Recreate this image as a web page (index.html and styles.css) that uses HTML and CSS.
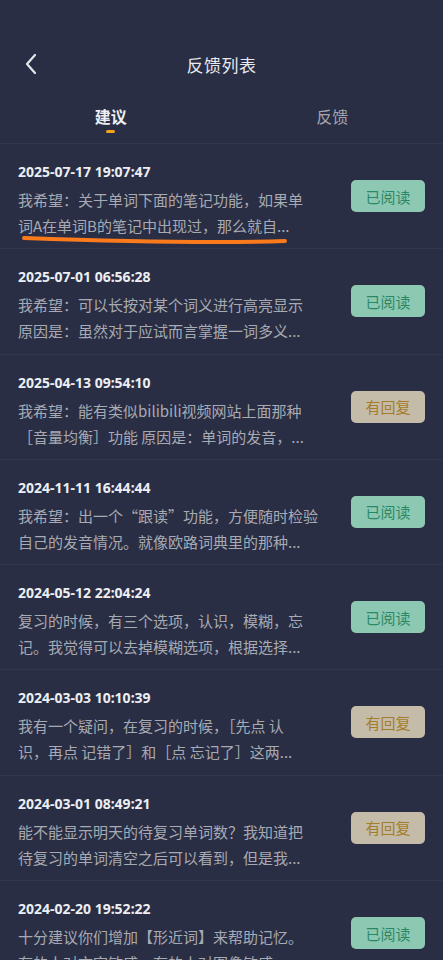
FILE: index.html
```html
<!DOCTYPE html>
<html lang="zh">
<head>
<meta charset="utf-8">
<link rel="stylesheet" href="styles.css">
</head>
<body>
<div class="page">
  <div class="status"></div>
  <header class="nav">
    <svg class="back" width="14" height="22" viewBox="0 0 14 22"><path d="M11 2 L3 11 L11 20" fill="none" stroke="#e6e7ec" stroke-width="2.2" stroke-linecap="round" stroke-linejoin="round"/></svg>
    <div class="title">反馈列表</div>
  </header>
  <div class="tabs">
    <div class="tab active">建议<span class="bar"></span></div>
    <div class="tab">反馈</div>
  </div>
  <ul class="list">
    <li class="item">
      <div class="body">
        <div class="date">2025-07-17 19:07:47</div>
        <div class="text">我希望：关于单词下面的笔记功能，如果单</div>
        <div class="text">词A在单词B的笔记中出现过，那么就自...</div>
      </div>
      <span class="tag read">已阅读</span>
      <svg class="mark" width="280" height="12" viewBox="0 0 280 12"><path d="M4 4 C 90 7, 200 9, 265 7" fill="none" stroke="#fb7a1c" stroke-width="4" stroke-linecap="round"/></svg>
    </li>
    <li class="item">
      <div class="body">
        <div class="date">2025-07-01 06:56:28</div>
        <div class="text">我希望：可以长按对某个词义进行高亮显示</div>
        <div class="text">原因是：虽然对于应试而言掌握一词多义...</div>
      </div>
      <span class="tag read">已阅读</span>
    </li>
    <li class="item">
      <div class="body">
        <div class="date">2025-04-13 09:54:10</div>
        <div class="text">我希望：能有类似bilibili视频网站上面那种</div>
        <div class="text">［音量均衡］功能 原因是：单词的发音，...</div>
      </div>
      <span class="tag reply">有回复</span>
    </li>
    <li class="item">
      <div class="body">
        <div class="date">2024-11-11 16:44:44</div>
        <div class="text">我希望：出一个“跟读”功能，方便随时检验</div>
        <div class="text">自己的发音情况。就像欧路词典里的那种...</div>
      </div>
      <span class="tag read">已阅读</span>
    </li>
    <li class="item">
      <div class="body">
        <div class="date">2024-05-12 22:04:24</div>
        <div class="text">复习的时候，有三个选项，认识，模糊，忘</div>
        <div class="text">记。我觉得可以去掉模糊选项，根据选择...</div>
      </div>
      <span class="tag read">已阅读</span>
    </li>
    <li class="item">
      <div class="body">
        <div class="date">2024-03-03 10:10:39</div>
        <div class="text">我有一个疑问，在复习的时候，［先点 认</div>
        <div class="text">识，再点 记错了］和［点 忘记了］这两...</div>
      </div>
      <span class="tag reply">有回复</span>
    </li>
    <li class="item">
      <div class="body">
        <div class="date">2024-03-01 08:49:21</div>
        <div class="text">能不能显示明天的待复习单词数？我知道把</div>
        <div class="text">待复习的单词清空之后可以看到，但是我...</div>
      </div>
      <span class="tag reply">有回复</span>
    </li>
    <li class="item">
      <div class="body">
        <div class="date">2024-02-20 19:52:22</div>
        <div class="text">十分建议你们增加【形近词】来帮助记忆。</div>
        <div class="text">有的人对文字敏感，有的人对图像敏感...</div>
      </div>
      <span class="tag read">已阅读</span>
    </li>
  </ul>
</div>
</body>
</html>
```
FILE: styles.css
```css
* { box-sizing: border-box; }
html, body { margin: 0; padding: 0; }
body {
  background: #292e44;
  font-family: "Noto Sans CJK SC", "Noto Sans", sans-serif;
  width: 443px;
  height: 960px;
  overflow: hidden;
}
.page { width: 443px; }
.status { height: 40px; }
.nav {
  position: relative;
  height: 48px;
  display: flex;
  align-items: center;
  justify-content: center;
}
.back {
  position: absolute;
  left: 24px;
  top: 13px;
}
.title {
  color: #e8e9ee;
  font-size: 17px;
  letter-spacing: 0.5px;
}
.tabs {
  display: flex;
  height: 56px;
  border-bottom: 1px solid #30364d;
}
.tab {
  position: relative;
  flex: 1;
  display: flex;
  justify-content: center;
  padding-top: 16px;
  font-size: 16px;
  color: #a3a5b0;
}
.tab.active {
  color: #eeeff3;
  font-weight: 700;
}
.bar {
  position: absolute;
  left: 50%;
  top: 42px;
  width: 9px;
  height: 3px;
  margin-left: -4.5px;
  border-radius: 2px;
  background: #f2a21b;
}
.list { list-style: none; margin: 0; padding: 0; }
.item {
  position: relative;
  display: flex;
  align-items: center;
  justify-content: space-between;
  padding: 18px 18px 9.3px 18px;
  border-bottom: 1px solid #30364d;
  height: 105.3px;
}
.body { display: flex; flex-direction: column; }
.date {
  height: 20px;
  line-height: 20px;
  color: #eceef2;
  font-family: "Noto Sans", sans-serif;
  font-weight: 700;
  font-size: 14px;
  margin-bottom: 5px;
}
.text {
  height: 26px;
  line-height: 26px;
  font-size: 15px;
  color: #a8aab3;
  white-space: nowrap;
}
.tag {
  width: 74px;
  height: 32px;
  border-radius: 5px;
  display: flex;
  align-items: center;
  justify-content: center;
  font-size: 15px;
  margin-top: -9px;
}
.tag.read { background: #8dc8b3; color: #2b8867; }
.tag.reply { background: #c4bca9; color: #a47c2a; }
.mark {
  position: absolute;
  left: 20px;
  top: 90px;
}
```
